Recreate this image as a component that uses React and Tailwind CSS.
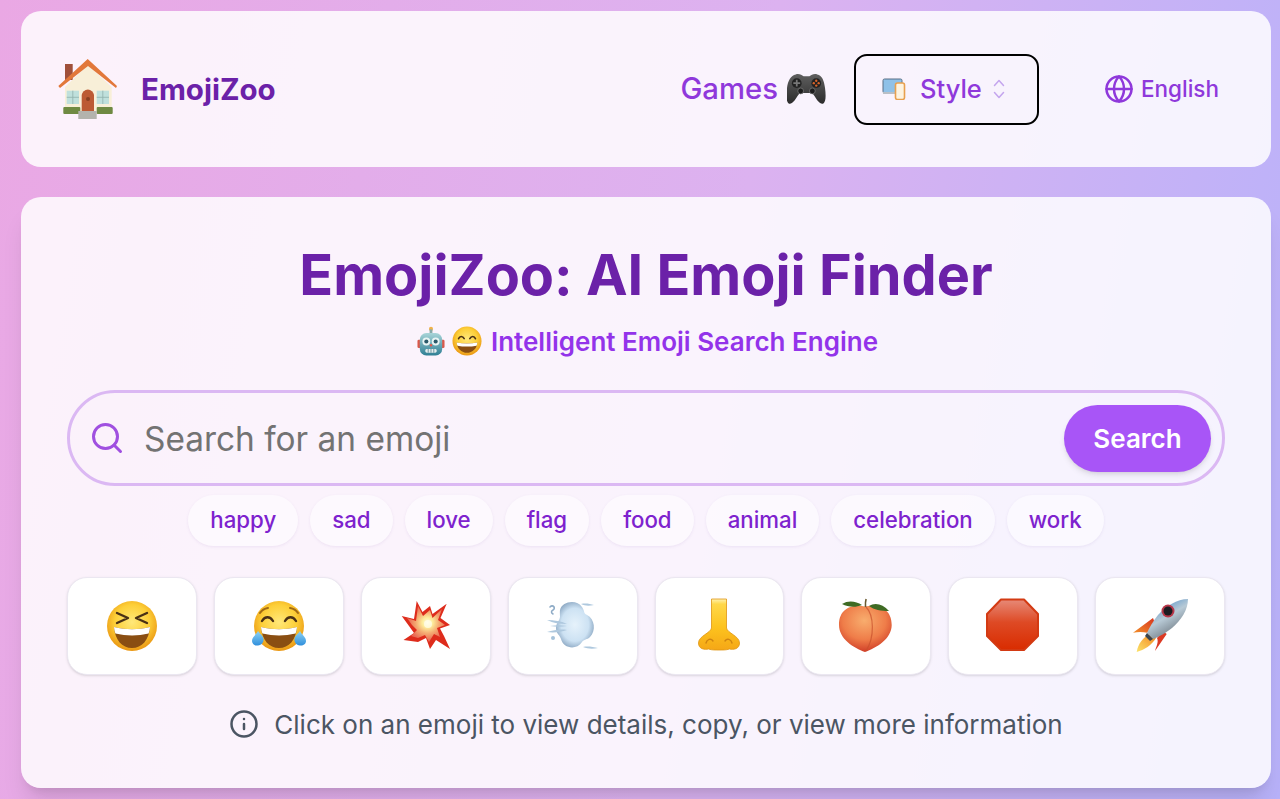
import React from 'react';
import { Search, Globe, Info } from 'lucide-react';

function FaceDefs({ id }) {
  return (
    <defs>
      <radialGradient id={id} cx="50%" cy="42%" r="58%">
        <stop offset="0%" stopColor="#ffe87a" />
        <stop offset="60%" stopColor="#fdcf38" />
        <stop offset="100%" stopColor="#ea9612" />
      </radialGradient>
    </defs>
  );
}

function SquintFace() {
  return (
    <svg width="64" height="64" viewBox="0 0 64 64">
      <FaceDefs id="squint" />
      <circle cx="32" cy="32" r="25" fill="url(#squint)" />
      <path d="M17 19l11 5-11 5M47 19l-11 5 11 5" fill="none" stroke="#4a3015" strokeWidth="2.4" strokeLinecap="round" strokeLinejoin="round" />
      <path d="M14 33c12 3 24 3 36 0-1 13-8 21-18 21S15 46 14 33z" fill="#8a4e12" />
      <path d="M14 33c12 3 24 3 36 0-.2 2.5-.7 4.500-1.400 6.500-11 2.500-22 2.500-33.200 0-.7-2-1.200-4-1.400-6.500z" fill="#fff" />
    </svg>
  );
}

function TearsFace() {
  return (
    <svg width="64" height="64" viewBox="0 0 64 64">
      <FaceDefs id="tears" />
      <defs>
        <linearGradient id="tear" x1="0" y1="0" x2="0" y2="1">
          <stop offset="0%" stopColor="#8fd4f5" />
          <stop offset="100%" stopColor="#2f8fdc" />
        </linearGradient>
      </defs>
      <circle cx="32" cy="32" r="25" fill="url(#tears)" />
      <path d="M15 27c3-5 8-5 11 0M38 27c3-5 8-5 11 0" fill="none" stroke="#4a3015" strokeWidth="2.4" strokeLinecap="round" />
      <path d="M13 19c2-3 5-4.500 8-5M51 19c-2-3-5-4.500-8-5" fill="none" stroke="#a06a14" strokeWidth="2" strokeLinecap="round" />
      <path d="M14 33c12 3 24 3 36 0-1 13-8 21-18 21S15 46 14 33z" fill="#8a4e12" />
      <path d="M14 33c12 3 24 3 36 0-.2 2.5-.7 4.500-1.400 6.500-11 2.500-22 2.500-33.200 0-.7-2-1.200-4-1.400-6.500z" fill="#fff" />
      <path d="M11 37c-2 4-6 6-6 10 0 3 3 5 6 4.500 4-.5 6-3.500 5.500-7-.5-3-3.500-4.500-5.500-7.500z" fill="url(#tear)" />
      <path d="M53 37c2 4 6 6 6 10 0 3-3 5-6 4.500-4-.5-6-3.500-5.500-7 .5-3 3.500-4.500 5.500-7.500z" fill="url(#tear)" />
    </svg>
  );
}

function Collision() {
  return (
    <svg width="64" height="64" viewBox="0 0 64 64">
      <defs>
        <radialGradient id="blast" cx="54%" cy="46%" r="50%">
          <stop offset="0%" stopColor="#fffde0" />
          <stop offset="28%" stopColor="#fdeb9a" />
          <stop offset="60%" stopColor="#f4ab72" />
          <stop offset="100%" stopColor="#ea6a55" />
        </radialGradient>
      </defs>
      <polygon points="22.7,7 28.5,18 36,12 38.500,20 52.7,9.7 46.5,24 56,31 46,34.5 50,42 56,55 42,46 36,55 32,44 24,48 9.5,46 20,39 15,32 7.7,22 20,25" fill="#de2c1c" />
      <polygon points="24,12 29,22 36,16 38.500,24 48,15 44,26 51,31 43,34 46,43 40,40 35,48 31,41 24,44 17,42 23,36 18,31 13,24 22,27" fill="url(#blast)" />
      <circle cx="34" cy="30" r="4" fill="#fffdf0" opacity="0.7" />
    </svg>
  );
}

function Dash() {
  return (
    <svg width="64" height="64" viewBox="0 0 64 64">
      <defs>
        <radialGradient id="cloud" cx="50%" cy="50%" r="52%">
          <stop offset="0%" stopColor="#e6f2fb" />
          <stop offset="70%" stopColor="#cde2f3" />
          <stop offset="100%" stopColor="#93aec8" />
        </radialGradient>
      </defs>
      <path d="M19 16c2-9 17-11 22-3 3 4 1 6 5 8 8 4 9 16 3 22-3 3-6 2-8 5-6 9-19 6-21-3-1-4-5-5-5-11 0-5 3-6 4-11 0-3-.3-5 0-7z" fill="url(#cloud)" />
      <path d="M6 26c7 0 14 1 20 4-7 0-14-1-20-4zM6 38c7-2 13-3 20-2-6 2-13 3-20 2zM9 32c6-1 11-1 17 0-6 1-11 1-17 0zM40 10c5-1 9 0 13 1-5 1-9 1-13-1zM42 53c5-1 10 0 15 1-5 1-10 1-15-1z" fill="#aec8de" />
      <path d="M9 13c3-3 6 1 3 3-2 1-2 3 0 4" fill="none" stroke="#8eabc6" strokeWidth="1.600" strokeLinecap="round" />
      <circle cx="12" cy="44" r="2" fill="#a5c2da" />
    </svg>
  );
}

function Nose() {
  return (
    <svg width="64" height="64" viewBox="0 0 64 64">
      <defs>
        <linearGradient id="bridge" x1="0" y1="0" x2="0" y2="1">
          <stop offset="0%" stopColor="#fff2b0" />
          <stop offset="10%" stopColor="#ffd84a" />
          <stop offset="55%" stopColor="#fdc31e" />
          <stop offset="100%" stopColor="#f5a716" />
        </linearGradient>
      </defs>
      <path d="M24.5 5h15v29c.7 5 13 8 13 15 0 6-6 7-10 6-3.500 1.200-6.500 1-10.500 1s-7 .2-10.500-1c-4 1-10 0-10-6 0-7 12.300-10 13-15z" fill="url(#bridge)" stroke="#e09512" strokeWidth="0.8" />
      <path d="M19 49c1-4 5-5 7-2M45 49c-1-4-5-5-7-2" fill="none" stroke="#cf8410" strokeWidth="1.400" strokeLinecap="round" />
    </svg>
  );
}

function Peach() {
  return (
    <svg width="64" height="64" viewBox="0 0 64 64">
      <defs>
        <radialGradient id="peach" cx="48%" cy="32%" r="68%">
          <stop offset="0%" stopColor="#f8ad6e" />
          <stop offset="60%" stopColor="#ef7d49" />
          <stop offset="100%" stopColor="#d03e28" />
        </radialGradient>
      </defs>
      <path d="M31 12.500C20 10 5 13 5 31c0 14 15 23 26 27 11-4 26.700-13 26.700-27C57.700 13 42 10 31 12.500z" fill="url(#peach)" />
      <path d="M32 13c8 8 9 30 0 44" fill="none" stroke="#c8502c" strokeWidth="1.200" opacity="0.7" />
      <path d="M8 10c6-4 14-3 20 1-7 3-14 2-20-1zM35 12c6-4 14-2 20 5-8 0-15-1-20-5z" fill="#3f6b24" />
      <path d="M31.500 13c-.2-3 0-6 .6-8" stroke="#6b5a30" strokeWidth="1.600" fill="none" />
    </svg>
  );
}

function Stop() {
  return (
    <svg width="64" height="64" viewBox="0 0 64 64">
      <defs>
        <linearGradient id="stopFill" x1="0" y1="0" x2="0" y2="1">
          <stop offset="0%" stopColor="#e78a78" />
          <stop offset="45%" stopColor="#de4a25" />
          <stop offset="100%" stopColor="#d92c00" />
        </linearGradient>
      </defs>
      <polygon points="20,5.5 43,5.5 57,20 57,42 43,56 20,56 6,42 6,20" fill="url(#stopFill)" stroke="#d33a13" strokeWidth="2" strokeLinejoin="round" />
    </svg>
  );
}

function Rocket() {
  return (
    <svg width="64" height="64" viewBox="0 0 64 64">
      <defs>
        <linearGradient id="hull" x1="0.2" y1="0" x2="0.8" y2="1">
          <stop offset="0%" stopColor="#3f86c6" />
          <stop offset="45%" stopColor="#b8cad6" />
          <stop offset="100%" stopColor="#59626a" />
        </linearGradient>
        <linearGradient id="flame" x1="1" y1="0" x2="0" y2="1">
          <stop offset="0%" stopColor="#f4841e" />
          <stop offset="100%" stopColor="#fbe36a" />
        </linearGradient>
        <linearGradient id="fin" x1="1" y1="0" x2="0" y2="1">
          <stop offset="0%" stopColor="#d6301e" />
          <stop offset="100%" stopColor="#f2902a" />
        </linearGradient>
      </defs>
      <path d="M25 24L5 38.700c5-1 10-1 14 0l9-7z" fill="url(#fin)" />
      <path d="M38.700 40L27 57c1-4 4-9 2-13l6-7z" fill="#dc3a24" />
      <path d="M22 40C15 43 10 50 8.700 58 16 56 24 51 28 44z" fill="url(#flame)" />
      <path d="M60 5c-11 0-22 7-30 16-5 6-9 13-11 18l6 6c5-2 13-6 19-11 9-8 16-18 16-29z" fill="url(#hull)" />
      <circle cx="40" cy="17" r="6.500" fill="#b8384a" />
      <circle cx="40" cy="17" r="4.500" fill="#1c1c22" />
      <path d="M19 39l6 6-3 2-5-5z" fill="#39444e" />
    </svg>
  );
}

function House() {
  return (
    <svg width="60" height="60" viewBox="0 0 60 60">
      <rect x="7" y="5" width="7.700" height="16" fill="#a0503a" />
      <path d="M7 28L30 6l23.700 22v27H7z" fill="#f8efd8" />
      <path d="M.3 27L29.700 0 59 27l-1 2L30 7 2 29z" fill="#e2783a" />
      <rect x="8.700" y="31.700" width="12.300" height="13.300" fill="#bfe0dc" />
      <rect x="38.700" y="31.700" width="12.300" height="13.300" fill="#bfe0dc" />
      <path d="M14.800 31.700v13.300M8.700 38.300H21M44.800 31.700v13.300M38.700 38.300H51" stroke="#8fb0ac" strokeWidth="0.800" />
      <path d="M23.700 52V36a6.200 6.200 0 0112.300 0v16z" fill="#bc5a34" />
      <circle cx="30" cy="40" r="2" fill="#8a3f22" />
      <rect x="5.300" y="48" width="17" height="7" rx="1" fill="#6f8a42" />
      <rect x="38.700" y="48" width="16" height="7" rx="1" fill="#6f8a42" />
      <rect x="20.300" y="52" width="18.400" height="8" fill="#b3b3ad" />
    </svg>
  );
}

function Controller() {
  return (
    <svg width="39" height="32" viewBox="0 0 40 32">
      <defs>
        <linearGradient id="pad" x1="0" y1="0" x2="0" y2="1">
          <stop offset="0%" stopColor="#5f5f5f" />
          <stop offset="100%" stopColor="#2c2c2c" />
        </linearGradient>
      </defs>
      <path d="M9 1c4-1 6 1 8 2h6c2-1 4-3 8-2 5 1 7 6 8 14 1 8 1 14-2 16-3 1-6-3-9-8-1-2-2-3-4-3H15c-2 0-3 1-4 3-3 5-6 9-9 8-3-2-3-8-2-16C1 7 4 2 9 1z" fill="url(#pad)" />
      <circle cx="10" cy="10" r="5" fill="#222" />
      <path d="M10 6.500v7M6.500 10h7" stroke="#777" strokeWidth="1.800" />
      <circle cx="30" cy="10" r="5" fill="#222" />
      <circle cx="30" cy="7.500" r="1.200" fill="#d8642a" />
      <circle cx="27.500" cy="10" r="1.200" fill="#d8642a" />
      <circle cx="32.500" cy="10" r="1.200" fill="#d8642a" />
      <circle cx="30" cy="12.500" r="1.200" fill="#d8642a" />
      <circle cx="14" cy="18" r="3" fill="#1c1c1c" stroke="#777" strokeWidth="0.800" />
      <circle cx="26" cy="18" r="3" fill="#1c1c1c" stroke="#777" strokeWidth="0.800" />
    </svg>
  );
}

function Devices() {
  return (
    <svg width="24" height="22" viewBox="0 0 24 22">
      <rect x="1" y="1" width="19" height="14" rx="1.500" fill="#8fc1e8" stroke="#5b6f84" strokeWidth="1" />
      <rect x="1" y="14" width="19" height="2" fill="#b9bfc6" />
      <rect x="13.500" y="5" width="9" height="16.500" rx="2" fill="#fdf3e0" stroke="#e8a04e" strokeWidth="1.600" />
    </svg>
  );
}

function Robot() {
  return (
    <svg width="28" height="31" viewBox="0 0 30 32">
      <defs>
        <linearGradient id="robo" x1="0" y1="0" x2="0" y2="1">
          <stop offset="0%" stopColor="#a8d4d8" />
          <stop offset="100%" stopColor="#2f7f94" />
        </linearGradient>
      </defs>
      <circle cx="15" cy="2.500" r="2.200" fill="#f0b24a" />
      <rect x="13.500" y="3" width="3" height="5" fill="#8aa" />
      <rect x="0.500" y="14" width="4" height="9" rx="1.500" fill="#d9584a" />
      <rect x="25.500" y="14" width="4" height="9" rx="1.500" fill="#d9584a" />
      <rect x="3" y="7" width="24" height="24" rx="7" fill="url(#robo)" />
      <circle cx="10" cy="16" r="4.200" fill="#e8f4f4" />
      <circle cx="20" cy="16" r="4.200" fill="#e8f4f4" />
      <circle cx="10" cy="16" r="2.200" fill="#2a5a6a" />
      <circle cx="20" cy="16" r="2.200" fill="#2a5a6a" />
      <circle cx="15" cy="20" r="1.300" fill="#e2584a" />
      <rect x="9" y="24" width="12" height="4" rx="1.500" fill="#e4eeee" />
      <path d="M12 24v4M15 24v4M18 24v4" stroke="#4a7a88" strokeWidth="0.800" />
    </svg>
  );
}

function GrinFace() {
  return (
    <svg width="30" height="30" viewBox="0 0 64 64">
      <FaceDefs id="grin" />
      <circle cx="32" cy="32" r="31" fill="url(#grin)" />
      <path d="M14 27c2.500-6 9-6 12 0M38 27c3-6 9.500-6 12 0" fill="none" stroke="#4a3015" strokeWidth="3.400" strokeLinecap="round" />
      <path d="M10 35c14 3 30 3 44 0-1 14-11 22-22 22S11 49 10 35z" fill="#8a4e12" />
      <path d="M10 35c14 3 30 3 44 0-.2 2.500-.8 5-1.600 7-13 2.600-28 2.600-40.800 0-.8-2-1.400-4.500-1.600-7z" fill="#fff" />
    </svg>
  );
}

const chips = ['happy', 'sad', 'love', 'flag', 'food', 'animal', 'celebration', 'work'];

const emojis = [
  { name: 'laughing', icon: <SquintFace /> },
  { name: 'joy', icon: <TearsFace /> },
  { name: 'collision', icon: <Collision /> },
  { name: 'dash', icon: <Dash /> },
  { name: 'nose', icon: <Nose /> },
  { name: 'peach', icon: <Peach /> },
  { name: 'stop sign', icon: <Stop /> },
  { name: 'rocket', icon: <Rocket /> },
];

export default function App() {
  return (
    <div className="min-h-screen bg-[linear-gradient(100deg,#eaa8e4,#dcb2f0_55%,#b8b2fa)] pt-[11px] pb-[11px] pl-[21px] pr-[9px] font-[Inter,sans-serif]">
      {/* Header */}
      <header className="flex h-[156px] items-center rounded-[20px] bg-white/85 pl-[37px] pr-[52px]">
        <div className="flex items-center gap-[23px]">
          <House />
          <span className="text-[29.5px] font-bold text-[#6b21a8]">EmojiZoo</span>
        </div>
        <nav className="ml-auto flex items-center">
          <a className="flex items-center gap-[9px] text-[29.3px] font-medium text-[#8f38db]">
            Games <Controller />
          </a>
          <button className="ml-[28px] flex h-[71px] w-[185px] items-center rounded-[13px] border-2 border-black pl-[26px]">
            <Devices />
            <span className="ml-[14px] text-[25.5px] font-medium text-[#8f38db]">Style</span>
            <svg className="ml-[10px]" width="14" height="22" viewBox="0 0 14 22" fill="none" stroke="#c4a5ee" strokeWidth="1.500" strokeLinecap="round" strokeLinejoin="round">
              <path d="M2.500 7.500L7 2.500l4.500 5M2.500 14.500L7 19.500l4.500-5" />
            </svg>
          </button>
          <button className="ml-[65px] flex items-center gap-[7px] text-[22.5px] font-medium text-[#8f38db]">
            <Globe size={30} strokeWidth={2} />
            English
          </button>
        </nav>
      </header>

      {/* Main panel */}
      <main className="mt-[30px] flex h-[591px] flex-col rounded-[20px] bg-white/85 px-[46px] pt-[44px] shadow-xl">
        <h1 className="text-center text-[55.8px] leading-[68px] font-bold text-[#6b21a8]">EmojiZoo: AI Emoji Finder</h1>
        <p className="mt-[14px] flex h-[36px] items-center justify-center gap-[7px] pl-[3px] text-[26px] font-semibold text-[#9333ea]">
          <Robot />
          <GrinFace />
          <span className="ml-[2px]">Intelligent Emoji Search Engine</span>
        </p>

        <div className="mt-[31px] flex h-[96px] items-center rounded-full border-[3px] border-[#dbb8f3] pr-[11px] pl-[19px]">
          <Search size={36} strokeWidth={2} className="text-[#a050e0]" />
          <span className="mt-[2px] ml-[19px] text-[33.4px] text-[#737373]">Search for an emoji</span>
          <button className="ml-auto h-[67px] w-[147px] rounded-full bg-[#a855f7] text-[26px] font-semibold text-white shadow-md">Search</button>
        </div>

        <div className="mt-[9px] flex justify-center gap-[12px]">
          {chips.map((chip) => (
            <span key={chip} className="flex h-[51px] items-center rounded-full bg-white/50 px-[22px] pb-[2px] text-[22.25px] font-medium text-[#7e22ce] shadow-[0_1px_3px_rgba(120,80,170,0.1)]">
              {chip}
            </span>
          ))}
        </div>

        <div className="mt-[31px] grid grid-cols-8 gap-[17px]">
          {emojis.map((emoji) => (
            <div key={emoji.name} className="flex h-[98px] items-center justify-center rounded-[20px] border-[1.5px] border-[#ebe7f1] bg-white shadow-sm">
              {emoji.icon}
            </div>
          ))}
        </div>

        <p className="mt-[29px] flex h-[40px] items-center justify-center gap-[15px] text-[26px] text-[#4b5563]">
          <Info size={30} strokeWidth={2} />
          Click on an emoji to view details, copy, or view more information
        </p>
      </main>
    </div>
  );
}
